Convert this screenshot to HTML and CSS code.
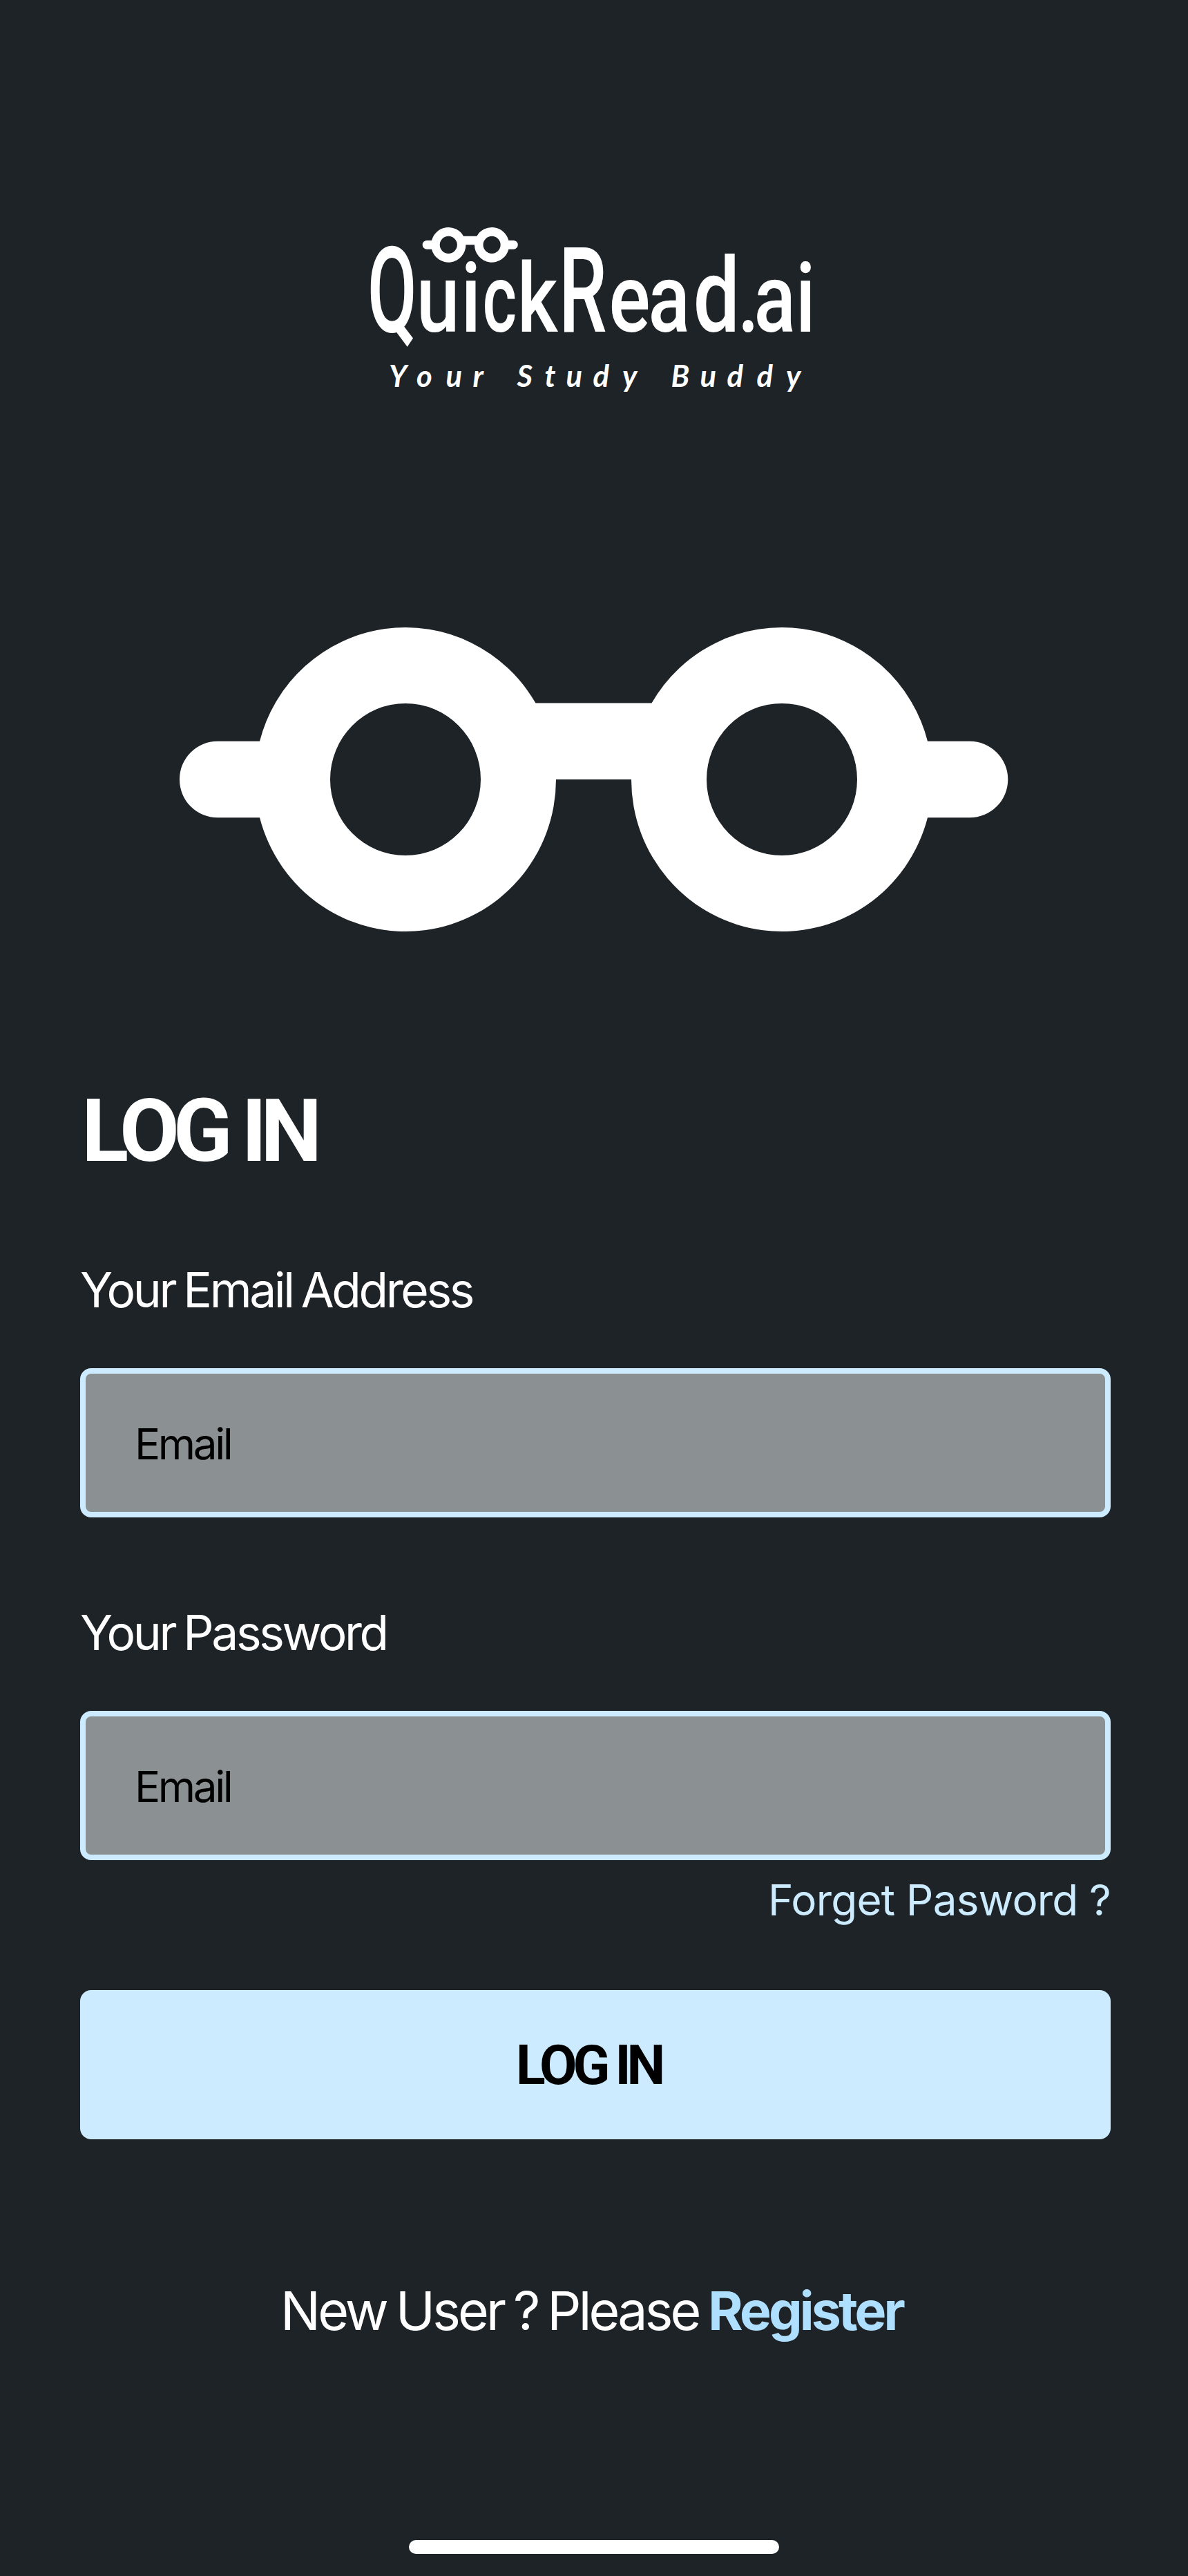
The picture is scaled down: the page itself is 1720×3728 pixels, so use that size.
FILE: index.html
```html
<!DOCTYPE html>
<html lang="en">
<head>
  <meta charset="utf-8">
  <title>QuickRead.ai - Log in</title>
  <link rel="stylesheet" href="styles.css">
</head>
<body>
  <main class="screen">
    <svg class="logo" viewBox="520 310 680 280" role="img" aria-label="QuickRead.ai">
      <defs>
        <symbol id="glasses" viewBox="0 0 1199 440" overflow="visible">
          <path fill-rule="evenodd" d="M0 220a55 55 0 0 1 55-55.300H116A218 220 0 0 1 515.500 109.600H683.500A218 220 0 0 1 1083 164.700H1144a55 55 0 0 1 0 110.600H1083A218 220 0 0 1 654 220H545A218 220 0 0 1 116 275.300H55a55 55 0 0 1-55-55.300ZM218 220a109 110 0 1 0 218 0a109 110 0 1 0-218 0ZM763 220a109 110 0 1 0 218 0a109 110 0 1 0-218 0Z"/>
        </symbol>
      </defs>
      <use href="#glasses" x="611.6" y="329" width="138.2" height="50.7"/>
      <g class="wordmark">
        <text class="cap" transform="translate(532 479.7) scale(.6 1)">Q</text>
        <text transform="translate(0 479.7) scale(.8 1)" x="753.8 834.4">ui</text>
        <text transform="translate(698.5 479.7) scale(.68 1)">c</text>
        <text transform="translate(0 479.7) scale(.8 1)" x="936.3">k</text>
        <text class="cap" transform="translate(809 479.7) scale(.64 1)">R</text>
        <text transform="translate(0 479.7) scale(.8 1)" x="1101.9 1173.1 1254.500 1335 1364.4 1440">ea<tspan class="tall">d</tspan>.ai</text>
      </g>
      <text class="tagline" y="560" x="563 603 645.500 684.500 705 748.500 788.500 819.500 858.500 901 925 971.500 1013.500 1052.500 1095.500 1138">Your Study Buddy</text>
    </svg>

    <svg class="glasses" viewBox="0 0 1199 440" aria-hidden="true">
      <use href="#glasses" width="1199" height="440"/>
    </svg>

    <form class="form">
      <h1 class="title">LOG IN</h1>
      <label class="label" for="email">Your Email Address</label>
      <div class="field" id="email">Email</div>
      <label class="label label-next" for="password">Your Password</label>
      <div class="field" id="password">Email</div>
      <a class="forgot">Forget Pasword ?</a>
      <div class="submit">LOG IN</div>
      <p class="signup">New User ? Please <a class="register">Register</a></p>
    </form>

    <div class="home-bar"></div>
  </main>
</body>
</html>
```
FILE: styles.css
```css
* { box-sizing: border-box; }

body {
  margin: 0;
  background: #1e2328;
  color: #fff;
  font-family: Inter, "Liberation Sans", sans-serif;
}

.screen {
  display: flex;
  flex-direction: column;
  width: 1720px;
  height: 3728px;
  padding: 310px 112px 32px 116px;
}

.logo {
  flex: none;
  width: 680px;
  height: 280px;
  margin-left: 404px;
  fill: #fff;
}

.wordmark {
  font-family: Roboto, sans-serif;
  font-size: 140px;
  font-weight: 500;
}

.wordmark .cap { font-size: 173px; }
.wordmark .tall { font-size: 150px; }

.tagline {
  font-family: Lato, sans-serif;
  font-size: 43.5px;
  font-style: italic;
  font-weight: 700;
}

.glasses {
  flex: none;
  overflow: visible;
  width: 1199px;
  height: 440px;
  margin: 318px 0 0 144px;
  fill: #fff;
}

.form {
  display: flex;
  flex-direction: column;
  margin-top: 209px;
}

.title {
  margin: 0 0 105px 2px;
  font: 700 126px/160px Roboto, sans-serif;
  letter-spacing: -9.2px;
}

.label {
  margin-bottom: 68px;
  font-size: 69.5px;
  line-height: 90px;
  letter-spacing: -3.4px;
  word-spacing: -4px;
}

.label-next { margin-top: 122px; }

.field {
  display: flex;
  align-items: center;
  height: 216px;
  padding: 3px 71px 0;
  border: 8px solid #ccebff;
  border-radius: 16px;
  background: #8b9092;
  color: #000;
  font-size: 62px;
  letter-spacing: -3.4px;
}

.forgot {
  align-self: flex-end;
  margin: 18px 0 90px;
  color: #ccebff;
  font-size: 62px;
  line-height: 80px;
  letter-spacing: -.8px;
}

.submit {
  display: flex;
  align-items: center;
  justify-content: center;
  height: 216px;
  padding: 2px 20px 0 0;
  border-radius: 16px;
  background: #ccebff;
  color: #000;
  font: 700 79px Roboto, sans-serif;
  letter-spacing: -6.2px;
}

.signup {
  margin: 198px 0 0 290px;
  font-size: 77px;
  line-height: 100px;
  letter-spacing: -3.85px;
  word-spacing: -4px;
  white-space: nowrap;
}

.register {
  color: #aedfff;
  font-weight: 700;
  letter-spacing: -3.9px;
}

.home-bar {
  width: 536px;
  height: 20px;
  margin: auto 0 0 476px;
  border-radius: 10px;
  background: #fff;
}
```
